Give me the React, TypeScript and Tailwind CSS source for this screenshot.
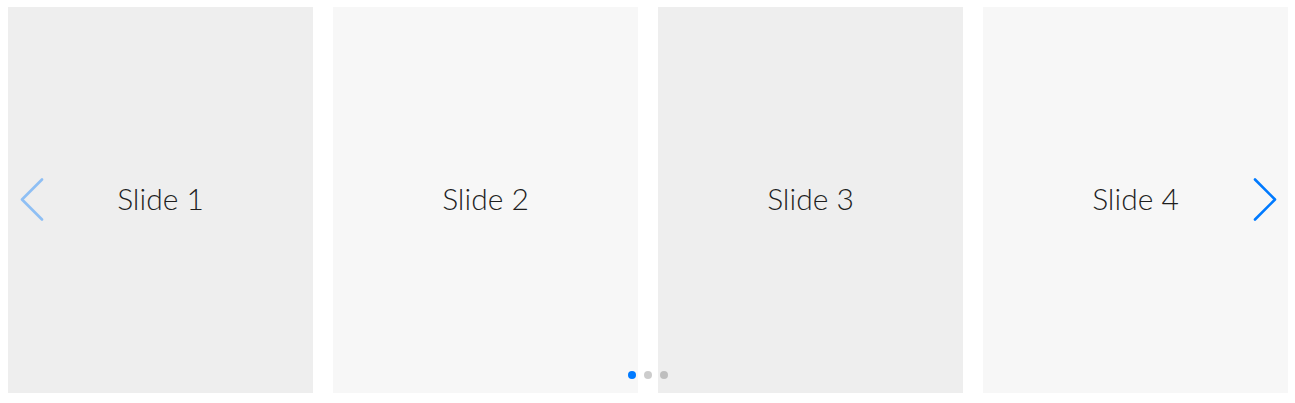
import React from "react";

const slides = [
  { label: "Slide 1", bg: "bg-[#eeeeee]" },
  { label: "Slide 2", bg: "bg-[#f7f7f7]" },
  { label: "Slide 3", bg: "bg-[#eeeeee]" },
  { label: "Slide 4", bg: "bg-[#f7f7f7]" },
];

function Chevron({ dir }: { dir: "left" | "right" }) {
  const points = dir === "left" ? "22,1.5 2,21.5 22,41.5" : "2,1.5 22,21.5 2,41.5";
  return (
    <svg width="24" height="44" viewBox="0 0 24 44">
      <polyline points={points} fill="none" stroke="currentColor" strokeWidth="2.6" strokeLinecap="round" strokeLinejoin="round" />
    </svg>
  );
}

export default function App() {
  return (
    <div className="w-[1295px] h-[403px] bg-white relative" style={{ fontFamily: "Lato, 'Open Sans', sans-serif" }}>
      <div className="flex gap-[20px] pl-[8px] pt-[7px]">
        {slides.map((s) => (
          <div key={s.label} className={`w-[305px] h-[386px] ${s.bg} flex items-center justify-center`}>
            <span className="text-[30px] font-light text-[#1e1e1e] leading-none mb-[4px]">{s.label}</span>
          </div>
        ))}
      </div>
      <div className="absolute left-[20px] top-[178px] text-[#007aff] opacity-40">
        <Chevron dir="left" />
      </div>
      <div className="absolute left-[1253px] top-[178px] text-[#007aff]">
        <Chevron dir="right" />
      </div>
      <div className="absolute left-[628px] top-[371px] flex gap-[8px]">
        <span className="w-[8px] h-[8px] rounded-full bg-[#007aff]" />
        <span className="w-[8px] h-[8px] rounded-full bg-black opacity-20" />
        <span className="w-[8px] h-[8px] rounded-full bg-black opacity-20" />
      </div>
    </div>
  );
}
